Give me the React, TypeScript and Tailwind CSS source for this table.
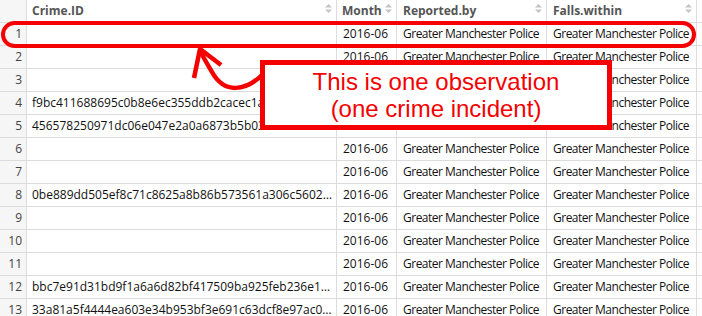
import React from "react";

const ids: Record<number, string> = {
  4: "f9bc411688695c0b8e6ec355ddb2cacec1a7e0c1b9d2f4a6e8c0b3d5f7a9c1e2",
  5: "456578250971dc06e047e2a0a6873b5b03f1c8e2d4a6b9c0e3f5a7d9b1c2e4f6",
  8: "0be889dd505ef8c71c8625a8b86b573561a306c5602e9f1b3d5a7c9e0f2b4d6a",
  12: "bbc7e91d31bd9f1a6a6d82bf417509ba925feb236e1c3a5b7d9f0e2c4a6b8d0f",
  13: "33a81a5f4444ea603e34b953bf3e691c63dcf8e97ac0d2b4f6a8c0e1b3d5f7a9",
};

const rowNumbers = Array.from({ length: 13 }, (_, i) => i + 1);

function SortIcon() {
  return (
    <svg
      width="7"
      height="9"
      viewBox="0 0 7 9"
      className="absolute top-[4px] right-[4px]"
    >
      <path d="M3.5 0 L7 3.5 L0 3.5 Z" fill="#c4c4c4" />
      <path d="M0 5.5 L7 5.5 L3.5 9 Z" fill="#c4c4c4" />
    </svg>
  );
}

export default function App() {
  return (
    <div className="relative w-[702px] h-[316px] overflow-hidden bg-white font-['Open_Sans',sans-serif] text-[12px]">
      {/* Header */}
      <div className="flex h-[23px] border-b border-[#dcdcdc] bg-white text-[#555] font-bold">
        <div className="w-[27px] shrink-0 border-r border-[#dcdcdc] bg-[#f6f6f6]" />
        <div className="relative w-[310px] shrink-0 border-r border-[#dcdcdc] pl-[5px] leading-[22px]">
          Crime.ID
          <SortIcon />
        </div>
        <div className="relative w-[60px] shrink-0 border-r border-[#dcdcdc] pl-[5px] leading-[22px]">
          Month
          <SortIcon />
        </div>
        <div className="relative w-[150px] shrink-0 border-r border-[#dcdcdc] pl-[6px] leading-[22px]">
          Reported.by
          <SortIcon />
        </div>
        <div className="relative w-[150px] shrink-0 border-r border-[#dcdcdc] pl-[6px] leading-[22px]">
          Falls.within
          <SortIcon />
        </div>
        <div className="flex-1" />
      </div>

      {/* Rows */}
      {rowNumbers.map((n) => (
        <div
          key={n}
          className="flex h-[23px] border-b border-[#dcdcdc] text-[#111] leading-[22px]"
        >
          <div className="w-[27px] shrink-0 border-r border-[#dcdcdc] bg-[#f6f6f6] pr-[4px] text-right text-[#444]">
            {n}
          </div>
          <div className="w-[310px] shrink-0 border-r border-[#dcdcdc] pl-[5px] pr-[3px] whitespace-nowrap overflow-hidden text-ellipsis">
            {ids[n] || ""}
          </div>
          <div className="w-[60px] shrink-0 border-r border-[#dcdcdc] pl-[6px] whitespace-nowrap overflow-hidden">
            2016-06
          </div>
          <div className="w-[150px] shrink-0 border-r border-[#dcdcdc] pl-[6px] whitespace-nowrap overflow-hidden tracking-[-0.5px]">
            Greater Manchester Police
          </div>
          <div className="w-[150px] shrink-0 border-r border-[#dcdcdc] pl-[6px] whitespace-nowrap overflow-hidden tracking-[-0.5px]">
            Greater Manchester Police
          </div>
          <div className="flex-1" />
        </div>
      ))}

      {/* Highlight around row 1 */}
      <div className="absolute left-[1px] top-[21px] w-[695px] h-[27px] rounded-full border-[4px] border-[#f40000]" />

      {/* Arrow */}
      <svg
        className="absolute left-0 top-0 pointer-events-none"
        width="702"
        height="316"
        viewBox="0 0 702 316"
      >
        <path
          d="M264 73 C246 92 224 94 212 72 C206 62 202 55 200 50"
          fill="none"
          stroke="#f40000"
          strokeWidth="4.5"
        />
        <path
          d="M194 78 L200 49 L221 65"
          fill="none"
          stroke="#f40000"
          strokeWidth="4.5"
        />
      </svg>

      {/* Callout */}
      <div className="absolute left-[260px] top-[60px] w-[352px] h-[70px] border-[5px] border-[#f40000] bg-white flex flex-col items-center justify-center text-[#f40000] text-[24px] leading-[27px] font-['Liberation_Sans',Arial,sans-serif]">
        <div>This is one observation</div>
        <div>(one crime incident)</div>
      </div>
    </div>
  );
}
